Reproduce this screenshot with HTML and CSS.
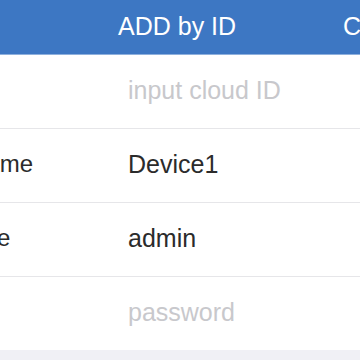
FILE: index.html
```html
<!DOCTYPE html>
<html lang="en">
<head>
  <meta charset="UTF-8">
  <meta name="viewport" content="width=device-width, initial-scale=1.0">
  <title>ADD by ID</title>
  <link rel="stylesheet" href="styles.css">
</head>
<body>
  <div class="header">
    <span class="title">ADD by ID</span>
    <span class="action">Confirm</span>
  </div>
  <form class="form">
    <div class="row">
      <label for="cloudId">Cloud ID</label>
      <input type="text" id="cloudId" placeholder="input cloud ID">
    </div>
    <div class="row">
      <label for="devName">Device Name</label>
      <input type="text" id="devName" value="Device1">
    </div>
    <div class="row">
      <label for="user">User Name</label>
      <input type="text" id="user" value="admin">
    </div>
    <div class="row">
      <label for="pwd">Password</label>
      <input type="password" id="pwd" placeholder="password">
    </div>
  </form>
</body>
</html>
```
FILE: styles.css
```css
body {
  margin: 0;
  width: 360px;
  height: 360px;
  overflow: hidden;
  background-color: #f0f0f5;
  font-family: "Liberation Sans", Arial, sans-serif;
}
.header {
  display: flex;
  align-items: center;
  box-sizing: border-box;
  height: 55px;
  padding-bottom: 1px;
  background-color: #3d77c3;
  border-bottom: 1px solid #8eb0dd;
  color: white;
  font-size: 25px;
  white-space: nowrap;
  overflow: hidden;
}
.title {
  margin-left: 118px;
}
.action {
  margin-left: 107px;
}
.form {
  margin: 0 0 0 -111px;
  background: white;
}
.row {
  display: flex;
  align-items: center;
  box-sizing: border-box;
  height: 74px;
  padding-bottom: 3px;
  border-bottom: 1px solid #e6e6e9;
}
.row:last-child {
  height: 73px;
  border-bottom: none;
}
label {
  width: 239px;
  flex-shrink: 0;
  font-size: 24px;
  color: #2b2b2b;
  white-space: nowrap;
}
input {
  flex: 1;
  min-width: 0;
  border: none;
  outline: none;
  padding: 0;
  font-family: inherit;
  font-size: 25px;
  color: #2b2b2b;
  background: transparent;
}
input::placeholder {
  color: #c8c8cc;
}
```
